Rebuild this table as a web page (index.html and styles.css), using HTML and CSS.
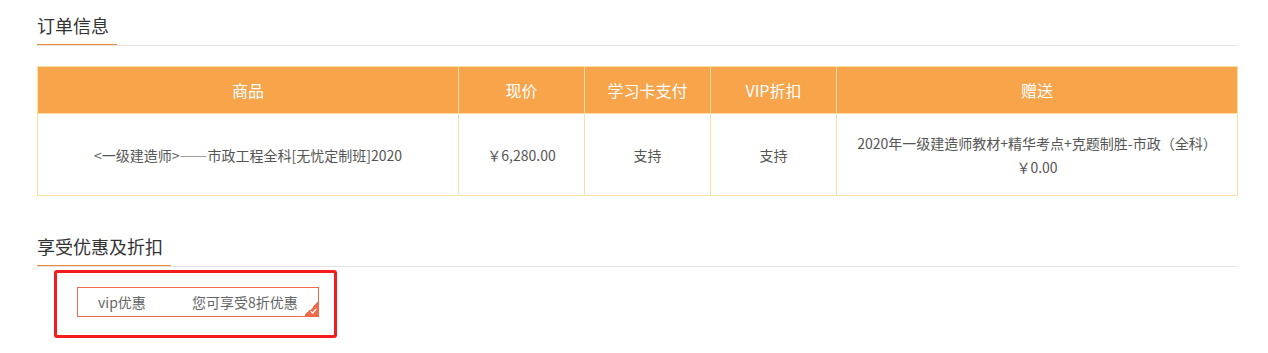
FILE: index.html
```html
<!DOCTYPE html>
<html lang="zh-CN">
<head>
<meta charset="utf-8">
<title>订单信息</title>
<link rel="stylesheet" href="styles.css">
</head>
<body>
<div class="page">
  <div class="sec-head"><span class="sec-title">订单信息</span></div>
  <table class="order">
    <colgroup>
      <col class="c-goods"><col class="c-mid"><col class="c-mid"><col class="c-mid"><col class="c-gift">
    </colgroup>
    <thead>
      <tr><th>商品</th><th>现价</th><th>学习卡支付</th><th>VIP折扣</th><th>赠送</th></tr>
    </thead>
    <tbody>
      <tr>
        <td>&lt;一级建造师&gt;——市政工程全科[无忧定制班]2020</td>
        <td>￥6,280.00</td>
        <td>支持</td>
        <td>支持</td>
        <td class="gift">2020年一级建造师教材+精华考点+克题制胜-市政（全科）<br>￥0.00</td>
      </tr>
    </tbody>
  </table>

  <div class="sec-head sec2"><span class="sec-title">享受优惠及折扣</span></div>
  <div class="mark">
    <div class="card">
      <span class="card-label">vip优惠</span>
      <span class="card-text">您可享受8折优惠</span>
      <span class="corner">
        <svg width="7" height="6" viewBox="0 0 7 6"><path d="M0.8 3.2 L2.7 5 L6.3 0.8" fill="none" stroke="#fff" stroke-width="1.3"/></svg>
      </span>
    </div>
  </div>
</div>
</body>
</html>
```

FILE: styles.css
```css
html, body {
  margin: 0;
  padding: 0;
  background: #fff;
}
body {
  font-family: "Microsoft YaHei", "Noto Sans CJK SC", sans-serif;
  color: #555;
}
.page {
  width: 1200px;
  padding-left: 37px;
}
.sec-head {
  border-bottom: 1px solid #e3e3e3;
  height: 45px;
}
.sec-title {
  display: inline-block;
  font-size: 18px;
  line-height: 24px;
  color: #333;
  padding: 13px 8px 7px 0;
  border-bottom: 1px solid #ee8a33;
}
.sec2 {
  margin-top: 25px;
}
.order {
  width: 1200px;
  margin-top: 20px;
  border-collapse: collapse;
  table-layout: fixed;
}
.c-goods { width: 421px; }
.c-mid { width: 126px; }
.c-gift { width: 401px; }
.order th,
.order td {
  border: 1px solid #fddfa4;
  text-align: center;
}
.order th {
  background: #f7a44b;
  color: #fff;
  font-size: 16px;
  font-weight: normal;
  height: 46px;
  padding: 0;
}
.order td {
  height: 81px;
  font-size: 14px;
  line-height: 24px;
  color: #555;
  padding: 0;
}
.mark {
  display: inline-block;
  margin: 3px 0 0 17px;
  padding: 14px 15px 18px 20px;
  border: 3px solid #f41c1c;
  border-radius: 3px;
}
.card {
  position: relative;
  width: 240px;
  height: 28px;
  border: 1px solid #ef6a4b;
  display: flex;
  align-items: center;
  font-size: 14px;
  color: #666;
}
.card-label {
  width: 94px;
  padding-left: 20px;
}
.corner {
  position: absolute;
  right: 0;
  bottom: 0;
  width: 14px;
  height: 14px;
  background: linear-gradient(135deg, transparent 50%, #ef6a4b 50%);
}
.corner svg {
  position: absolute;
  right: 1px;
  bottom: 2px;
}
```
